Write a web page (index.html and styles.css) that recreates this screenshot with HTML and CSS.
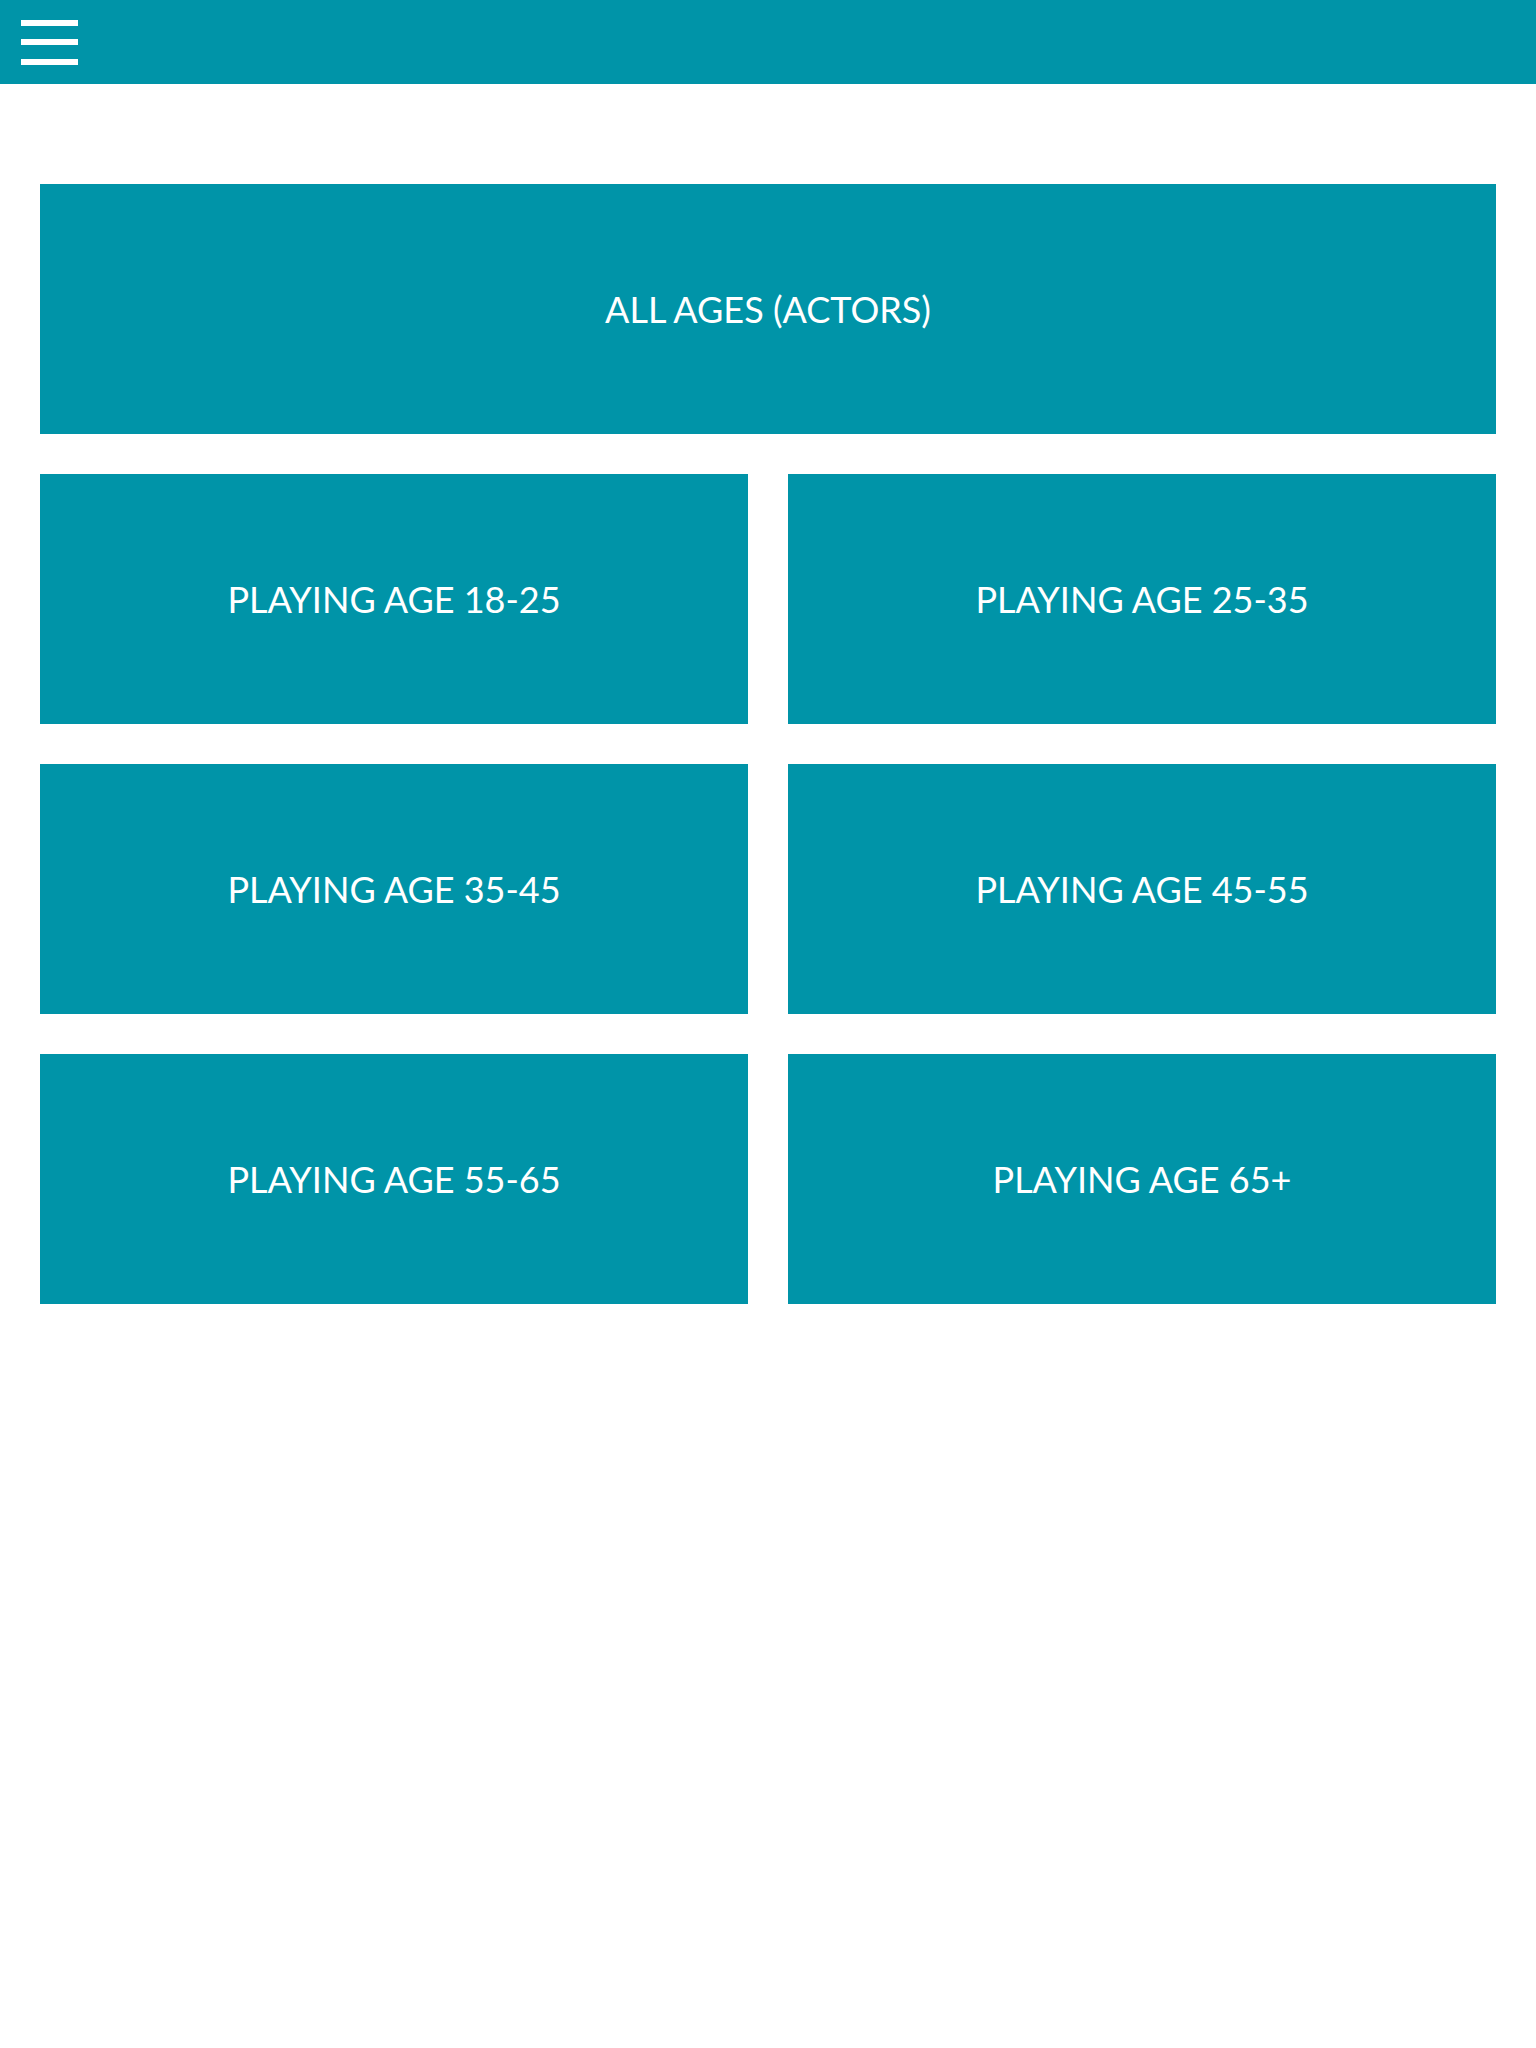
FILE: index.html
```html
<!DOCTYPE html>
<html lang="en">
<head>
    <meta charset="UTF-8">
    <meta name="viewport" content="width=device-width, initial-scale=1.0">
    <title>Playing Ages</title>
    <link rel="stylesheet" href="styles.css">
</head>
<body>
    <header class="topbar">
        <button class="menu-toggle" aria-label="Menu">
            <span></span>
            <span></span>
            <span></span>
        </button>
    </header>

    <main class="container">
        <div class="age-grid">
            <a class="age-card age-card-wide" href="#">ALL AGES (ACTORS)</a>
            <a class="age-card" href="#">PLAYING AGE 18-25</a>
            <a class="age-card" href="#">PLAYING AGE 25-35</a>
            <a class="age-card" href="#">PLAYING AGE 35-45</a>
            <a class="age-card" href="#">PLAYING AGE 45-55</a>
            <a class="age-card" href="#">PLAYING AGE 55-65</a>
            <a class="age-card" href="#">PLAYING AGE 65+</a>
        </div>
    </main>
</body>
</html>
```

FILE: styles.css
```css
body {
    font-family: Lato, 'Liberation Sans', sans-serif;
    background-color: #fff;
    color: #fff;
    margin: 0;
    padding: 0;
}
.topbar {
    height: 84px;
    background-color: #0094a8;
    display: flex;
    align-items: center;
    padding-left: 21px;
}
.menu-toggle {
    background: none;
    border: none;
    padding: 0;
    width: 57px;
    display: flex;
    flex-direction: column;
    gap: 13.5px;
    cursor: pointer;
}
.menu-toggle span {
    display: block;
    height: 6px;
    background: #fff;
}
.container {
    padding: 100px 40px;
}
.age-grid {
    display: grid;
    grid-template-columns: 1fr 1fr;
    gap: 40px;
}
.age-card {
    height: 250px;
    background-color: #0094a8;
    color: #fff;
    text-decoration: none;
    display: flex;
    align-items: center;
    justify-content: center;
    font-size: 36px;
}
.age-card-wide {
    grid-column: 1 / 3;
}
```
